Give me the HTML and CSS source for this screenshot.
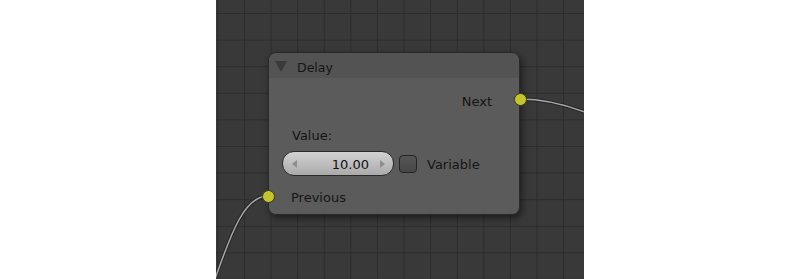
FILE: index.html
```html
<!DOCTYPE html>
<html lang="en">

<head>
    <meta charset="UTF-8">
    <title>Node Editor</title>
    <link rel="stylesheet" href="styles.css">
</head>

<body>
    <div class="editor">
        <svg class="links" width="368" height="279" viewBox="216 0 368 279">
            <path class="link-edge" d="M520,99 C540,99 565,104 590,114" />
            <path class="link" d="M520,99 C540,99 565,104 590,114" />
            <path class="link-edge" d="M268,196 C245,196 232,230 214,282" />
            <path class="link" d="M268,196 C245,196 232,230 214,282" />
        </svg>

        <div class="node">
            <div class="node-header">
                <span class="collapse"></span>
                <span class="node-title">Delay</span>
            </div>
            <div class="node-body">
                <div class="row row-output">
                    <span>Next</span>
                    <span class="socket socket-out"></span>
                </div>
                <div class="row row-label">Value:</div>
                <div class="row row-props">
                    <div class="num-field">
                        <span class="arrow arrow-left"></span>
                        <span class="num">10.00</span>
                        <span class="arrow arrow-right"></span>
                    </div>
                    <span class="checkbox"></span>
                    <span class="check-label">Variable</span>
                </div>
                <div class="row row-input">
                    <span class="socket socket-in"></span>
                    <span>Previous</span>
                </div>
            </div>
        </div>
    </div>
</body>

</html>
```

FILE: styles.css
```css
* {
    margin: 0;
    padding: 0;
    box-sizing: border-box;
}

body {
    font-family: "DejaVu Sans", "Liberation Sans", sans-serif;
    font-size: 13px;
    color: #151515;
    background-color: #ffffff;
    display: flex;
    justify-content: center;
    height: 279px;
    overflow: hidden;
}

.editor {
    position: relative;
    width: 368px;
    height: 279px;
    background-color: #393939;
    background-image:
        linear-gradient(to right, #2c2c2c 1px, transparent 1px),
        linear-gradient(to bottom, #2c2c2c 1px, transparent 1px);
    background-size: 26.6px 26.6px;
    background-position: 1.4px 13px;
}

/* links between sockets */
.links {
    position: absolute;
    left: 0;
    top: 0;
}

.links path {
    fill: none;
}

.link-edge {
    stroke: #262626;
    stroke-width: 3.5;
}

.link {
    stroke: #a8a8a8;
    stroke-width: 1.5;
}

/* the node itself sits on the canvas */
.node {
    position: absolute;
    left: 52px;
    top: 52px;
    width: 252px;
    height: 163px;
    border: 1px solid #2a2a2a;
    border-radius: 8px;
    background-color: rgba(94, 94, 94, 0.92);
    box-shadow: 2px 3px 7px rgba(0, 0, 0, 0.5);
    display: flex;
    flex-direction: column;
}

.node-header {
    height: 25px;
    display: flex;
    align-items: center;
    padding: 4px 0 0 6px;
    background-color: rgba(70, 70, 70, 0.35);
    border-radius: 7px 7px 0 0;
}

.collapse {
    width: 0;
    height: 0;
    border-left: 6.5px solid transparent;
    border-right: 6.5px solid transparent;
    border-top: 11px solid #3a3a3a;
    margin-right: 10px;
    margin-bottom: 2px;
}

.node-title {
    font-size: 12.5px;
}

.node-body {
    display: flex;
    flex-direction: column;
}

.row {
    position: relative;
    display: flex;
    align-items: center;
    height: 22px;
}

.row-output {
    margin-top: 10px;
    justify-content: flex-end;
    padding-right: 27px;
}

.row-output span:first-child {
    margin-top: 4px;
}

.row-label {
    margin-top: 14px;
    padding-left: 23px;
}

.row-props {
    margin-top: 5px;
    height: 25px;
    padding-left: 13px;
}

.row-input {
    margin-top: 9px;
    padding-left: 22px;
}

.row-input span:last-child {
    margin-top: 2px;
}

/* sockets */
.socket {
    position: absolute;
    top: 50%;
    width: 13px;
    height: 13px;
    margin-top: -6.5px;
    border-radius: 50%;
    background-color: #c4c42c;
    border: 1px solid #3a3a1c;
}

.socket-out {
    right: -7.5px;
}

.socket-in {
    left: -7.5px;
}

/* number field */
.num-field {
    width: 112px;
    height: 25px;
    border: 1px solid #2a2a2a;
    border-radius: 12px;
    background: linear-gradient(#d2d2d2, #aaaaaa);
    display: flex;
    align-items: center;
    padding: 0 8px 0 9px;
}

.num {
    flex-grow: 1;
    text-align: right;
    padding-right: 11px;
    padding-top: 1px;
    color: #111;
}

.arrow {
    width: 0;
    height: 0;
    border-top: 4px solid transparent;
    border-bottom: 4px solid transparent;
}

.arrow-left {
    border-right: 5px solid #8e8e8e;
}

.arrow-right {
    border-left: 5px solid #8e8e8e;
}

.checkbox {
    width: 18px;
    height: 18px;
    margin-left: 5px;
    border: 1px solid #242424;
    border-radius: 4px;
    background: linear-gradient(#555555, #474747);
}

.check-label {
    margin-left: 10px;
    padding-top: 1px;
}
```
